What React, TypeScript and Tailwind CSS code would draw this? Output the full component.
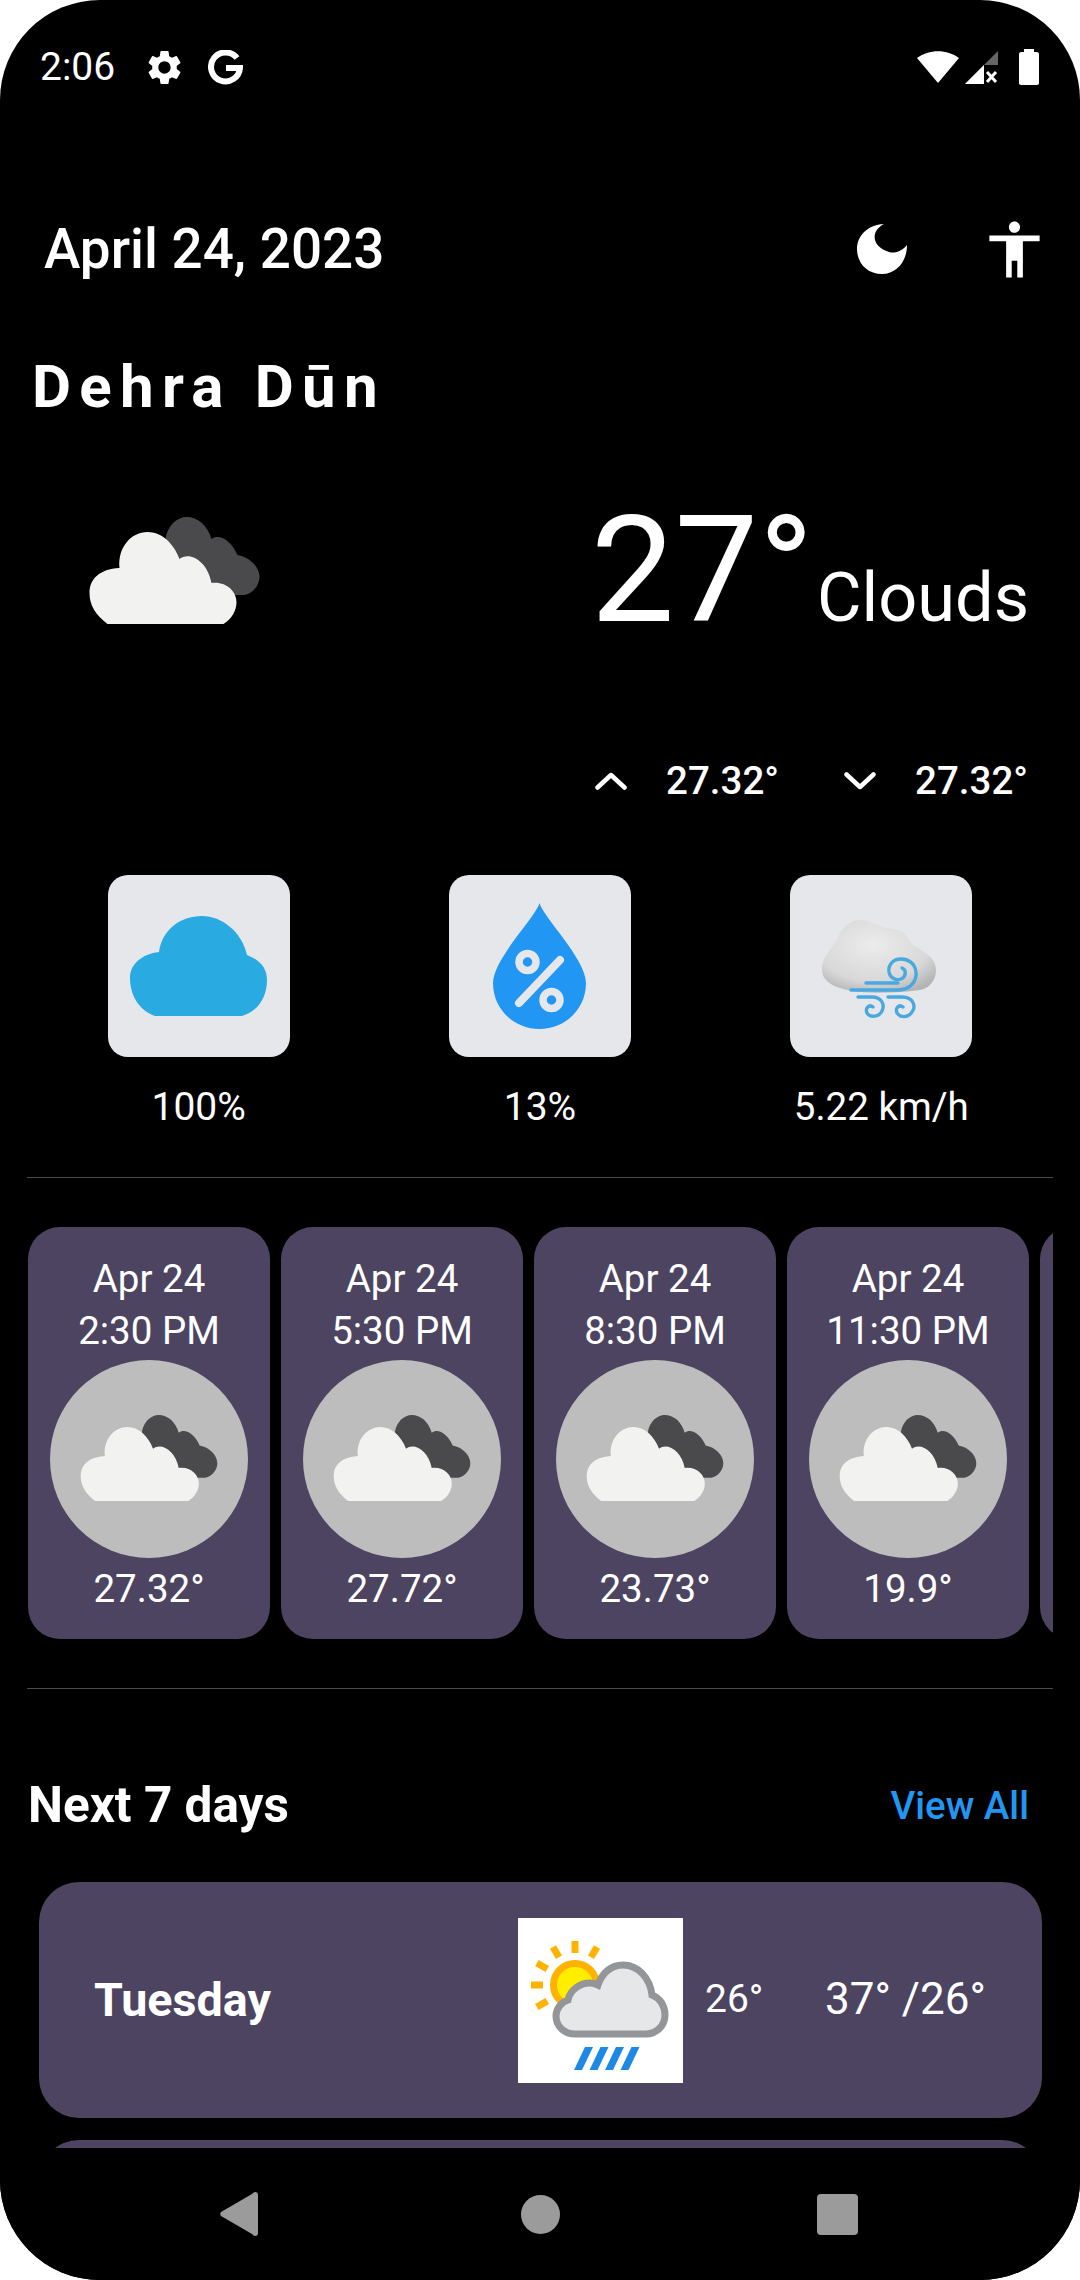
import React from 'react';

const forecast = [
  { time: '2:30 PM', temp: '27.32°' },
  { time: '5:30 PM', temp: '27.72°' },
  { time: '8:30 PM', temp: '23.73°' },
  { time: '11:30 PM', temp: '19.9°' },
];

// two-tone cloud used in the hero and in the hourly cards
const CloudsIcon: React.FC<{ className?: string }> = ({ className = '' }) => (
  <svg viewBox="0 0 170 107" className={className}>
    <path
      d="M76 22C78 8 88 0 97 0C108 0 118 8 122 22C130 16 142 24 148 38C160 40 170 50 170 60C170 68 164 76 155 78L120 78L76 40Z"
      fill="#4a4a4c"
    />
    <path
      d="M18 107C6 98 0 88 0 76C0 62 10 52 30 51C28 30 42 15 58 15C72 15 84 26 90 42C100 34 118 44 122 66C136 64 147 74 147 85C147 94 142 102 134 107Z"
      fill="#f2f2f0"
    />
  </svg>
);

const DropIcon = () => (
  <svg viewBox="0 0 93 126" className="w-[93px] h-[126px]">
    <path d="M46.5 0C50 14 93 56 93 80C93 106 72 126 46.5 126C21 126 0 106 0 80C0 56 43 14 46.5 0Z" fill="#2196f3" />
    <circle cx="34.5" cy="59" r="8.5" fill="none" stroke="#e5e7eb" strokeWidth="7.5" />
    <circle cx="58.5" cy="97" r="8.5" fill="none" stroke="#e5e7eb" strokeWidth="7.5" />
    <path d="M67 57L26 100" stroke="#e5e7eb" strokeWidth="8" strokeLinecap="round" />
  </svg>
);

const WindIcon = () => (
  <svg viewBox="0 0 182 182" className="w-[182px] h-[182px]">
    <defs>
      <radialGradient id="windCloud" cx="45%" cy="35%" r="70%">
        <stop offset="0%" stopColor="#ececec" />
        <stop offset="70%" stopColor="#d8d8d8" />
        <stop offset="100%" stopColor="#b4b4b4" />
      </radialGradient>
    </defs>
    <path
      d="M32 95C32 80 42 76 48 62C54 50 62 45 70 45C80 45 88 52 98 53C108 54 114 56 120 66C124 74 146 78 146 95C146 106 138 114 130 115C100 119 70 119 50 113C40 110 32 104 32 95Z"
      fill="url(#windCloud)"
    />
    <g fill="none" stroke="#4aa8e0" strokeWidth="3.4" strokeLinecap="round">
      <path d="M61 115H108C122 115 127 104 126 97C125 88 118 84 111 84C103 84 98 90 99 97C100 103 106 106 111 104C116 102 117 95 112 93" />
      <path d="M76 108H108" />
      <path d="M68 122H82C92 122 95 130 92 136C89 142 80 143 77 138C75 133 79 129 83 132" />
      <path d="M98 122H112C124 122 126 132 122 137C118 143 110 143 107 138C105 133 109 129 113 132" />
    </g>
  </svg>
);

const RainSunIcon = () => (
  <svg viewBox="0 0 165 165" className="w-[165px] h-[165px] bg-white shrink-0">
    <circle cx="57" cy="67" r="21.5" fill="#ffee00" stroke="#ffb300" strokeWidth="7" />
    {[-90, -60, -120, -150, 180, 150].map((a) => (
      <rect key={a} x="32" y="-3.5" width="12" height="7" fill="#ffb300" transform={`translate(57 67) rotate(${a})`} />
    ))}
    <path
      d="M57 116C46 116 38 108 38 98C38 90 44 84 50 82C52 72 62 65 72 65C75 65 78 66 80 67C84 55 93 47 105 47C120 47 132 60 134 77C142 80 147 88 147 97C147 108 138 116 128 116Z"
      fill="#e6e7e8"
      stroke="#939598"
      strokeWidth="7"
    />
    {[0, 15.5, 31, 46.5].map((dx) => (
      <polygon key={dx} points={`${56 + dx},152 ${64 + dx},152 ${75 + dx},129 ${67 + dx},129`} fill="#1e88e5" />
    ))}
  </svg>
);

const StatusBar = () => (
  <div className="h-[134px] flex items-center pl-[40px] pr-[41px] relative">
    <span className="w-[73px] text-[39px] leading-none text-white">2:06</span>
    <svg viewBox="0 0 24 24" className="w-[41px] h-[41px] ml-[31px] fill-white">
      <path d="M19.14 12.94c.04-.3.06-.61.06-.94 0-.32-.02-.64-.07-.94l2.03-1.58a.49.49 0 0 0 .12-.61l-1.92-3.32a.488.488 0 0 0-.59-.22l-2.39.96c-.5-.38-1.03-.7-1.62-.94l-.36-2.54a.484.484 0 0 0-.48-.41h-3.84c-.24 0-.43.17-.47.41l-.36 2.54c-.59.24-1.13.57-1.62.94l-2.39-.96c-.22-.08-.47 0-.59.22L2.74 8.87c-.12.21-.08.47.12.61l2.03 1.58c-.05.3-.09.63-.09.94s.02.64.07.94l-2.03 1.58a.49.49 0 0 0-.12.61l1.92 3.32c.12.22.37.29.59.22l2.39-.96c.5.38 1.03.7 1.62.94l.36 2.54c.05.24.24.41.48.41h3.84c.24 0 .44-.17.47-.41l.36-2.54c.59-.24 1.13-.56 1.62-.94l2.39.96c.22.08.47 0 .59-.22l1.92-3.32c.12-.22.07-.47-.12-.61l-2.01-1.58zM12 15.6c-1.98 0-3.6-1.62-3.6-3.6s1.62-3.6 3.6-3.6 3.6 1.62 3.6 3.6-1.62 3.6-3.6 3.6z" />
    </svg>
    <svg viewBox="0 0 35 35" className="w-[35px] h-[35px] ml-[23px] fill-none stroke-white">
      <path d="M29 8A14.5 14.5 0 1 0 32 18H18" strokeWidth="6" />
    </svg>
    <div className="ml-auto flex items-center">
      <svg viewBox="0 0 42 32" className="w-[42px] h-[32px] fill-white">
        <path d="M21 32L0 7C12 -2 30 -2 42 7Z" />
      </svg>
      <svg viewBox="0 0 33 33" className="w-[33px] h-[33px] ml-[6px]">
        <path d="M33 0L0 33H19V14H33Z" fill="#666" />
        <path d="M19 14L0 33H19Z" fill="#fff" />
        <path d="M22 21L31 31M31 21L22 31" stroke="#fff" strokeWidth="3" />
      </svg>
      <svg viewBox="0 0 20 36" className="w-[20px] h-[36px] ml-[21px] fill-white">
        <path d="M5 0H15V3H18C19 3 20 4 20 5V34C20 35 19 36 18 36H2C1 36 0 35 0 34V5C0 4 1 3 2 3H5Z" />
      </svg>
    </div>
  </div>
);

const Divider = () => <div className="mx-[27px] h-px bg-[#4a4a4a]" />;

const NavBar = () => (
  <div className="h-[132px] flex items-center pl-[220px] bg-black">
    <svg viewBox="0 0 38 44" className="w-[38px] h-[44px] fill-[#9b9b9b]">
      <path d="M35 0C37 0 38 1 38 3V41C38 43 37 44 35 44C34 44 33 43 32 42L1 24C0 23 0 21 1 20L32 2C33 1 34 0 35 0Z" />
    </svg>
    <div className="w-[39px] h-[39px] rounded-full bg-[#9b9b9b] ml-[263px]" />
    <div className="w-[41px] h-[41px] rounded-[4px] bg-[#9b9b9b] ml-[257px]" />
  </div>
);

export default function App() {
  return (
    <div className="w-[1080px] h-[2280px] bg-white font-['Roboto',sans-serif] text-white">
      <div className="w-full h-full bg-black rounded-[100px] overflow-hidden flex flex-col">
        <div className="h-[2148px] overflow-hidden shrink-0">
          <StatusBar />

          <div className="mt-[86px] h-[58px] flex items-center pl-[44px] relative">
            <h1 className="text-[54.8px] leading-none font-medium">April 24, 2023</h1>
            <svg viewBox="0 0 51 50" className="w-[51px] h-[50px] ml-auto fill-white">
              <path d="M27 0C10 1 0 12 0 25C0 40 11 50 25 50C39 50 50 38 50 21C45 27 38 30 32 28C22 25 16 18 18 10C19 6 23 2 27 0Z" />
            </svg>
            <svg viewBox="0 0 24 24" className="w-[67px] h-[67px] ml-[73px] mr-[32px] fill-white">
              <path d="M12 2c1.1 0 2 .9 2 2s-.9 2-2 2-2-.9-2-2 .9-2 2-2zm9 7h-6v13h-2v-6h-2v6H9V9H3V7h18v2z" />
            </svg>
          </div>

          <div className="mt-[71px] h-[76px] flex items-center pl-[32px]">
            <h2 className="text-[60px] leading-none font-bold tracking-[8.3px]">Dehra Dūn</h2>
          </div>

          <div className="mt-[87px] h-[112px] flex items-end pl-[89px] pr-[51px]">
            <CloudsIcon className="w-[171px] h-[107px]" />
            <div className="ml-auto flex items-end">
              <span className="text-[149px] leading-[108px] font-normal">27°</span>
              <span className="text-[68.5px] leading-[52px] ml-[3px]">Clouds</span>
            </div>
          </div>

          <div className="mt-[137px] h-[40px] flex items-center justify-end pr-[52px] text-[38.5px] font-medium">
            <svg viewBox="0 0 32 18" className="w-[32px] h-[18px] fill-none stroke-white">
              <path d="M2.5 15.5L16 3L29.5 15.5" strokeWidth="4.5" strokeLinecap="round" strokeLinejoin="round" />
            </svg>
            <span className="ml-[39px]">27.32°</span>
            <svg viewBox="0 0 32 18" className="w-[32px] h-[18px] ml-[65px] fill-none stroke-white">
              <path d="M2.5 2.5L16 15L29.5 2.5" strokeWidth="4.5" strokeLinecap="round" strokeLinejoin="round" />
            </svg>
            <span className="ml-[39px]">27.32°</span>
          </div>

          <div className="mt-[74px] grid grid-cols-3 px-[28px]">
            <div className="flex flex-col items-center">
              <div className="w-[182px] h-[182px] rounded-[20px] bg-[#e5e7eb] flex items-center justify-center">
                <svg viewBox="0 0 137 100" className="w-[137px] h-[100px] fill-[#29abe2]">
                  <path d="M25 100C8 94 0 78 0 62C0 48 12 38 29 36C32 14 50 0 72 0C92 0 112 16 117 39C130 44 137 52 137 64C137 82 127 96 112 100Z" />
                </svg>
              </div>
              <span className="mt-[25px] h-[50px] leading-[50px] text-[39px]">100%</span>
            </div>
            <div className="flex flex-col items-center">
              <div className="w-[182px] h-[182px] rounded-[20px] bg-[#e5e7eb] flex items-center justify-center">
                <DropIcon />
              </div>
              <span className="mt-[25px] h-[50px] leading-[50px] text-[39px]">13%</span>
            </div>
            <div className="flex flex-col items-center">
              <div className="w-[182px] h-[182px] rounded-[20px] bg-[#e5e7eb] overflow-hidden">
                <WindIcon />
              </div>
              <span className="mt-[25px] h-[50px] leading-[50px] text-[38.5px]">5.22 km/h</span>
            </div>
          </div>

          <div className="mt-[45px]">
            <Divider />
          </div>

          <div className="mt-[49px] ml-[28px] w-[1025px] overflow-hidden flex gap-[11px]">
            {forecast.map((f) => (
              <div key={f.time} className="w-[242px] h-[412px] shrink-0 rounded-[32px] bg-[#4c4461] flex flex-col items-center pt-[26px] text-[38.5px]">
                <span className="leading-[52px]">Apr 24</span>
                <span className="leading-[52px]">{f.time}</span>
                <div className="mt-[3px] w-[198px] h-[198px] rounded-full bg-[#bdbdbd] flex items-center justify-center">
                  <CloudsIcon className="w-[138px] h-[86px] mt-[-2px]" />
                </div>
                <span className="mt-[6px] leading-[50px]">{f.temp}</span>
              </div>
            ))}
            <div className="w-[242px] h-[412px] shrink-0 rounded-[32px] bg-[#4c4461]" />
          </div>

          <div className="mt-[49px]">
            <Divider />
          </div>

          <div className="mt-[92px] h-[50px] flex items-center justify-between pl-[28px] pr-[51px]">
            <h3 className="text-[49.5px] leading-none font-bold">Next 7 days</h3>
            <span className="text-[38.5px] leading-none font-medium text-[#2196f3]">View All</span>
          </div>

          <div className="mt-[51px] ml-[39px] mr-[38px] h-[236px] rounded-[40px] bg-[#4c4461] flex items-center pl-[55px]">
            <span className="w-[424px] text-[46.7px] font-bold">Tuesday</span>
            <RainSunIcon />
            <span className="ml-[22px] w-[120px] text-[39px] leading-none mt-[-2px]">26°</span>
            <span className="text-[44px] leading-none mt-[-2px]">37° /26°</span>
          </div>

          <div className="mt-[22px] ml-[39px] mr-[38px] h-[236px] rounded-[40px] bg-[#4c4461]" />
        </div>

        <NavBar />
      </div>
    </div>
  );
}
